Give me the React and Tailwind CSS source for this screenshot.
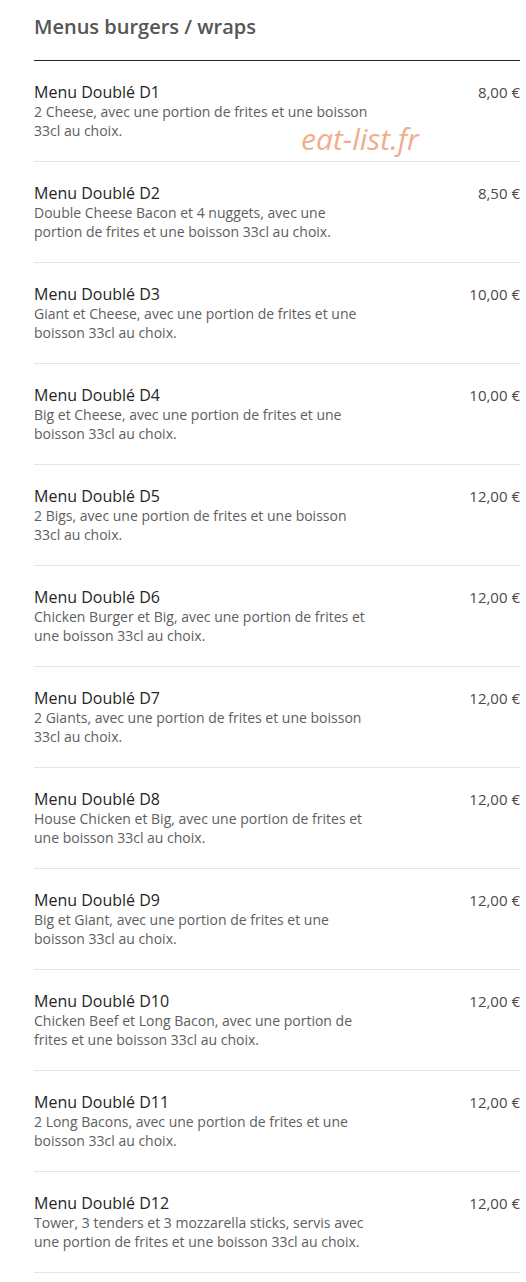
import React from 'react';

const items = [
  { name: 'Menu Doublé D1', price: '8,00 €', desc: '2 Cheese, avec une portion de frites et une boisson 33cl au choix.' },
  { name: 'Menu Doublé D2', price: '8,50 €', desc: 'Double Cheese Bacon et 4 nuggets, avec une portion de frites et une boisson 33cl au choix.' },
  { name: 'Menu Doublé D3', price: '10,00 €', desc: 'Giant et Cheese, avec une portion de frites et une boisson 33cl au choix.' },
  { name: 'Menu Doublé D4', price: '10,00 €', desc: 'Big et Cheese, avec une portion de frites et une boisson 33cl au choix.' },
  { name: 'Menu Doublé D5', price: '12,00 €', desc: '2 Bigs, avec une portion de frites et une boisson 33cl au choix.' },
  { name: 'Menu Doublé D6', price: '12,00 €', desc: 'Chicken Burger et Big, avec une portion de frites et une boisson 33cl au choix.' },
  { name: 'Menu Doublé D7', price: '12,00 €', desc: '2 Giants, avec une portion de frites et une boisson 33cl au choix.' },
  { name: 'Menu Doublé D8', price: '12,00 €', desc: 'House Chicken et Big, avec une portion de frites et une boisson 33cl au choix.' },
  { name: 'Menu Doublé D9', price: '12,00 €', desc: 'Big et Giant, avec une portion de frites et une boisson 33cl au choix.' },
  { name: 'Menu Doublé D10', price: '12,00 €', desc: 'Chicken Beef et Long Bacon, avec une portion de frites et une boisson 33cl au choix.' },
  { name: 'Menu Doublé D11', price: '12,00 €', desc: '2 Long Bacons, avec une portion de frites et une boisson 33cl au choix.' },
  { name: 'Menu Doublé D12', price: '12,00 €', desc: 'Tower, 3 tenders et 3 mozzarella sticks, servis avec une portion de frites et une boisson 33cl au choix.' },
];

export default function App() {
  return (
    <div className="relative min-h-[1282px] bg-white pl-[34px] pr-[6px] font-['Open_Sans',sans-serif]">
      {/* Section title */}
      <h2 className="pt-[13px] pb-[19px] text-[20px] leading-[28px] font-semibold text-[#555]">
        Menus burgers / wraps
      </h2>

      <div className="border-t border-[#222]">
        {items.map((item) => (
          <div
            key={item.name}
            className="flex justify-between gap-4 border-b border-[#e6e6e6] pt-[21px] pb-[21px]"
          >
            <div className="w-[340px]">
              <div className="text-[16px] leading-[20px] font-medium text-[#262626]">{item.name}</div>
              <p className="text-[14px] leading-[19px] text-[#5e5e5e]">{item.desc}</p>
            </div>
            <div className="text-[15px] leading-[20px] text-[#4a4a4a] whitespace-nowrap">{item.price}</div>
          </div>
        ))}
      </div>

      {/* Watermark */}
      <div className="absolute left-[301px] top-[119px] text-[30px] leading-[40px] italic text-[#efa682] opacity-90">
        eat-list.fr
      </div>
    </div>
  );
}
